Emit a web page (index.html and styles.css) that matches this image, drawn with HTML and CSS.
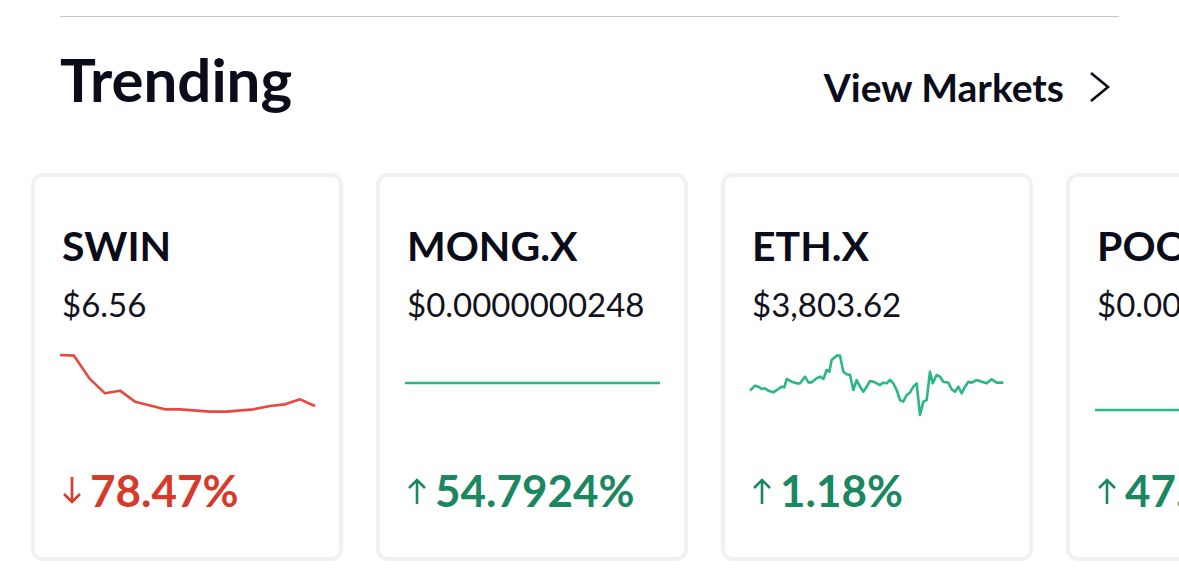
FILE: index.html
```html
<!DOCTYPE html>
<html lang="en">
<head>
<meta charset="utf-8">
<title>Trending</title>
<link rel="stylesheet" href="styles.css">
</head>
<body>
<section class="trending">
  <div class="top">
    <div class="rule"></div>
    <div class="head">
      <h2 class="title">Trending</h2>
      <a class="view-link" href="#">
        <span class="view-text">View Markets</span>
        <svg class="chevron" width="24" height="32" viewBox="0 0 24 32"><polyline points="3,2 20,16 3,30" fill="none" stroke="#0b0c1a" stroke-width="2.6"/></svg>
      </a>
    </div>
  </div>
  <div class="cards">
    <div class="card">
      <div class="sym">SWIN</div>
      <div class="price">$6.56</div>
      <svg class="spark" width="256" height="70" viewBox="30 30 768 210" preserveAspectRatio="none"><path class="line down" d="M30 45 L72 47 L118 115 L165 160 L210 152 L255 185 L345 208 L390 208 L480 215 L530 215 L610 208 L660 198 L705 193 L750 178 L795 198"/></svg>
      <div class="pct down">
        <svg class="arrow" width="20" height="30" viewBox="0 0 20 30"><path d="M10 2 V27 M2 19 L10 27 L18 19" fill="none" stroke="currentColor" stroke-width="2.6"/></svg>
        <span>78.47%</span>
      </div>
    </div>
    <div class="card">
      <div class="sym">MONG.X</div>
      <div class="price">$0.0000000248</div>
      <svg class="spark" width="256" height="70" viewBox="30 30 768 210" preserveAspectRatio="none"><path class="line up" d="M30 129 L795 129"/></svg>
      <div class="pct up">
        <svg class="arrow" width="20" height="30" viewBox="0 0 20 30"><path d="M10 29 V5 M2 13 L10 5 L18 13" fill="none" stroke="currentColor" stroke-width="2.6"/></svg>
        <span>54.7924%</span>
      </div>
    </div>
    <div class="card">
      <div class="sym">ETH.X</div>
      <div class="price">$3,803.62</div>
      <svg class="spark" width="256" height="70" viewBox="30 30 768 210" preserveAspectRatio="none"><path class="line up" d="M30 152 L45 137 L55 140 L65 147 L75 145 L85 152 L100 157 L115 147 L125 140 L133 142 L140 117 L155 125 L170 130 L180 130 L195 110 L205 127 L215 127 L230 115 L240 110 L250 117 L260 90 L268 95 L275 60 L290 47 L300 47 L310 95 L320 103 L330 105 L340 150 L350 120 L360 140 L370 155 L380 140 L390 123 L400 125 L410 130 L420 135 L430 128 L440 130 L450 120 L460 130 L470 150 L480 180 L490 185 L500 165 L510 158 L520 140 L530 130 L540 225 L550 185 L560 180 L570 95 L578 130 L590 105 L600 110 L610 125 L625 128 L635 148 L645 155 L655 140 L665 160 L675 140 L685 125 L695 128 L710 120 L725 125 L740 130 L755 118 L770 128 L790 128"/></svg>
      <div class="pct up">
        <svg class="arrow" width="20" height="30" viewBox="0 0 20 30"><path d="M10 29 V5 M2 13 L10 5 L18 13" fill="none" stroke="currentColor" stroke-width="2.6"/></svg>
        <span>1.18%</span>
      </div>
    </div>
    <div class="card">
      <div class="sym">POOH.X</div>
      <div class="price">$0.0000004713</div>
      <svg class="spark" width="256" height="70" viewBox="30 30 768 210" preserveAspectRatio="none"><path class="line up" d="M30 210 L795 210"/></svg>
      <div class="pct up">
        <svg class="arrow" width="20" height="30" viewBox="0 0 20 30"><path d="M10 29 V5 M2 13 L10 5 L18 13" fill="none" stroke="currentColor" stroke-width="2.6"/></svg>
        <span>47.21%</span>
      </div>
    </div>
  </div>
</section>
</body>
</html>
```
FILE: styles.css
```css
html, body {
  margin: 0;
  padding: 0;
  background: #ffffff;
  overflow: hidden;
}
body {
  font-family: Lato, "Noto Sans", sans-serif;
  color: #0b0c1a;
}
.top {
  padding: 16px 60px 0;
}
.rule {
  border-top: 1px solid #c6c6c9;
}
.head {
  display: flex;
  justify-content: space-between;
  align-items: baseline;
  margin-top: 30px;
  padding-right: 7px;
}
.title {
  margin: 0;
  font-size: 60px;
  line-height: 64px;
  font-weight: 700;
  color: #0b0c1a;
}
.view-link {
  display: flex;
  align-items: center;
  text-decoration: none;
  color: #0b0c1a;
}
.view-text {
  font-size: 39px;
  line-height: 48px;
  font-weight: 700;
}
.chevron {
  margin-left: 24px;
  display: block;
}
.cards {
  display: flex;
  gap: 33px;
  padding-left: 31px;
  margin-top: 62px;
  overflow: hidden;
}
.card {
  flex: 0 0 312px;
  height: 388px;
  box-sizing: border-box;
  border: 4px solid #f1f1f3;
  border-radius: 12px;
  padding: 45px 0 0 27px;
  display: flex;
  flex-direction: column;
  align-items: flex-start;
}
.sym {
  font-size: 41px;
  line-height: 48px;
  font-weight: 700;
  white-space: nowrap;
}
.price {
  margin-top: 14px;
  font-size: 33px;
  line-height: 40px;
  font-weight: 400;
  color: #111220;
  white-space: nowrap;
}
.spark {
  display: block;
  margin-top: 26px;
  margin-left: -2px;
  overflow: visible;
}
.line {
  fill: none;
  stroke-width: 2.6;
  stroke-linejoin: round;
  vector-effect: non-scaling-stroke;
}
.line.down {
  stroke: #e7493f;
}
.line.up {
  stroke: #2bb784;
}
.pct {
  margin-top: 44px;
  display: flex;
  align-items: center;
  font-size: 44px;
  line-height: 52px;
  font-weight: 700;
  white-space: nowrap;
}
.pct.down {
  color: #d63a2b;
}
.pct.up {
  color: #1b8761;
}
.arrow {
  display: block;
  margin-right: 8px;
}
```
